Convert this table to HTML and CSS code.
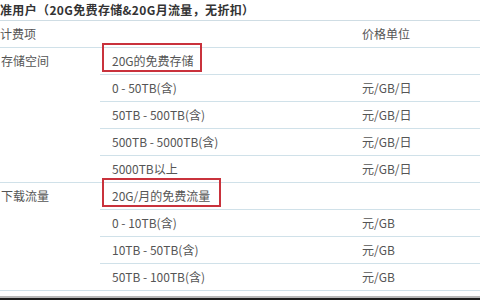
FILE: index.html
```html
<!DOCTYPE html>
<html lang="zh-CN">
<head>
<meta charset="utf-8">
<title>计费项</title>
<link rel="stylesheet" href="styles.css">
</head>
<body>
<div class="page">
  <div class="title">准用户（20G免费存储&amp;20G月流量，无折扣）</div>
  <div class="grid">
    <div class="cell c1 head-first">计费项</div>
    <div class="cell c2"></div>
    <div class="cell c3">价格单位</div>

    <div class="cell c1 span5"><span class="lbl">存储空间</span></div>
    <div class="cell c2"><span class="mark">20G的免费存储</span></div>
    <div class="cell c3"></div>
    <div class="cell c2">0 - 50TB(含)</div>
    <div class="cell c3">元/GB/日</div>
    <div class="cell c2">50TB - 500TB(含)</div>
    <div class="cell c3">元/GB/日</div>
    <div class="cell c2">500TB - 5000TB(含)</div>
    <div class="cell c3">元/GB/日</div>
    <div class="cell c2">5000TB以上</div>
    <div class="cell c3">元/GB/日</div>

    <div class="cell c1 span4"><span class="lbl">下载流量</span></div>
    <div class="cell c2"><span class="mark mark-wide">20G/月的免费流量</span></div>
    <div class="cell c3"></div>
    <div class="cell c2">0 - 10TB(含)</div>
    <div class="cell c3">元/GB</div>
    <div class="cell c2">10TB - 50TB(含)</div>
    <div class="cell c3">元/GB</div>
    <div class="cell c2">50TB - 100TB(含)</div>
    <div class="cell c3">元/GB</div>
  </div>
  <div class="frame-bottom"></div>
</div>
</body>
</html>
```
FILE: styles.css
```css
html, body {
  margin: 0;
  padding: 0;
  background: #ffffff;
}
body {
  width: 480px;
  height: 300px;
  overflow: hidden;
  font-family: "Noto Sans CJK SC", "Noto Sans", sans-serif;
  font-size: 12px;
  color: #555555;
}
.page {
  width: 480px;
  height: 300px;
  display: flex;
  flex-direction: column;
  overflow: hidden;
}
.title {
  height: 20px;
  line-height: 20px;
  border-bottom: 1px solid #cfdde4;
  font-weight: bold;
  color: #333333;
  letter-spacing: 0.35px;
  white-space: nowrap;
}
.grid {
  display: grid;
  grid-template-columns: 110px 250px 140px;
  grid-auto-rows: 27px;
  margin-left: -10px;
  width: 500px;
}
.cell {
  box-sizing: border-box;
  border-bottom: 1px solid #d0e1e9;
  display: flex;
  align-items: center;
  line-height: 16px;
  white-space: nowrap;
}
.c1 {
  grid-column: 1;
  padding-left: 11px;
}
.head-first {
  padding-left: 10px;
}
.c2 {
  grid-column: 2;
  padding-left: 12px;
}
.c3 {
  grid-column: 3;
  padding-left: 12px;
}
.span5 {
  grid-row: span 5;
  align-items: flex-start;
}
.span4 {
  grid-row: span 4;
  align-items: flex-start;
}
.lbl {
  display: block;
  line-height: 26px;
}
.mark {
  position: relative;
  display: inline-block;
  line-height: 16px;
}
.mark::after {
  content: "";
  position: absolute;
  left: -10px;
  right: -8px;
  top: -10px;
  bottom: -3px;
  border: 2px solid #c9323c;
}
.mark-wide::after {
  right: -11px;
}
.frame-bottom {
  margin-top: auto;
  height: 2px;
  border-top: 2px solid #b8b8b8;
  background: #1e1e1e;
}
```
